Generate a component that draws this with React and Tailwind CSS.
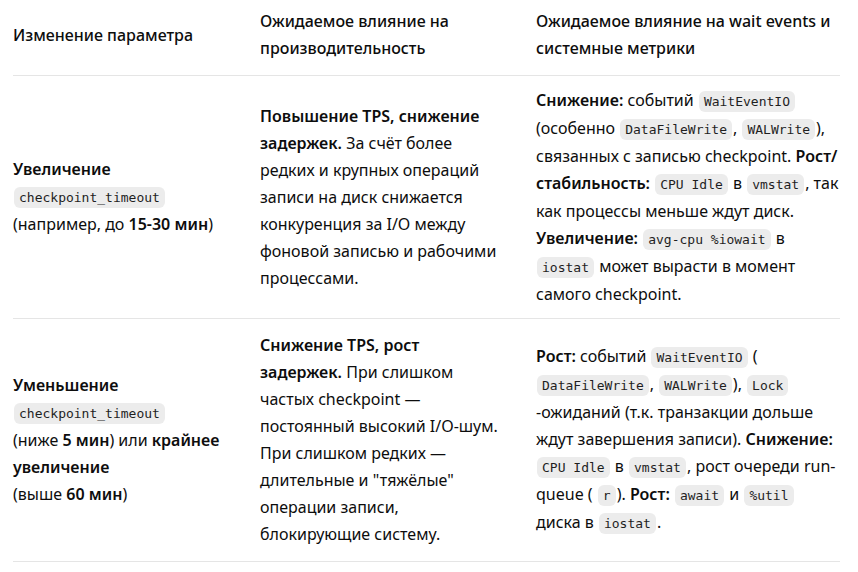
import React from "react";

const C = ({ children }) => (
  <code className="mx-[1px] whitespace-nowrap rounded-md bg-[#ececec] px-[5px] py-[3px] font-['DejaVu_Sans_Mono','Liberation_Mono',monospace] text-[13px] text-[#1f1f1f]">
    {children}
  </code>
);

export default function App() {
  return (
    <div className="min-h-[572px] w-[858px] bg-white font-['Noto_Sans','Open_Sans',sans-serif] text-[16px] leading-[27px] text-[#0d0d0d]">
      <table className="ml-[13px] w-[827px] table-fixed border-collapse">
        <colgroup>
          <col className="w-[247px]" />
          <col className="w-[276px]" />
          <col className="w-[304px]" />
        </colgroup>
        <thead>
          <tr className="border-b border-[#e5e5e5]">
            <th className="pb-[13px] pr-3 pt-[8px] text-left align-middle font-medium">Изменение параметра</th>
            <th className="pb-[13px] pr-[36px] pt-[8px] text-left align-middle font-medium">Ожидаемое влияние на производительность</th>
            <th className="pb-[13px] pt-[8px] text-left align-middle font-medium">Ожидаемое влияние на wait events и системные метрики</th>
          </tr>
        </thead>
        <tbody>
          <tr className="border-b border-[#e5e5e5]">
            <td className="h-[243px] pr-3 align-middle">
              <strong className="font-semibold">Увеличение</strong>
              <br />
              <C>checkpoint_timeout</C>
              <br />
              (например, до <strong className="font-semibold">15-30 мин</strong>)
            </td>
            <td className="pr-[36px] align-middle">
              <strong className="font-semibold">Повышение TPS, снижение задержек.</strong> За счёт более редких и крупных операций записи на диск снижается конкуренция за I/O между фоновой записью и рабочими процессами.
            </td>
            <td className="align-middle">
              <strong className="font-semibold">Снижение:</strong> событий <C>WaitEventIO</C> (особенно <C>DataFileWrite</C>, <C>WALWrite</C>), связанных с записью checkpoint. <strong className="font-semibold">Рост/стабильность:</strong> <C>CPU Idle</C> в <C>vmstat</C>, так как процессы меньше ждут диск. <strong className="font-semibold">Увеличение:</strong> <C>avg-cpu %iowait</C> в <C>iostat</C> может вырасти в момент самого checkpoint.
            </td>
          </tr>
          <tr className="border-b border-[#e5e5e5]">
            <td className="h-[243px] pr-3 align-middle">
              <strong className="font-semibold">Уменьшение</strong>
              <br />
              <C>checkpoint_timeout</C>
              <br />
              (ниже <strong className="font-semibold">5 мин</strong>) или <strong className="font-semibold">крайнее увеличение</strong>
              <br />
              (выше <strong className="font-semibold">60 мин</strong>)
            </td>
            <td className="pr-[36px] align-middle">
              <strong className="font-semibold">Снижение TPS, рост задержек.</strong> При слишком частых checkpoint — постоянный высокий I/O-шум. При слишком редких — длительные и "тяжёлые" операции записи, блокирующие систему.
            </td>
            <td className="align-middle">
              <strong className="font-semibold">Рост:</strong> событий <C>WaitEventIO</C> (<wbr /><C>DataFileWrite</C>, <C>WALWrite</C>), <C>Lock</C><wbr />-ожиданий (т.к. транзакции дольше ждут завершения записи). <strong className="font-semibold">Снижение:</strong> <C>CPU Idle</C> в <C>vmstat</C>, рост очереди run-queue (&nbsp;<C>r</C>). <strong className="font-semibold">Рост:</strong> <C>await</C> и <C>%util</C> диска в <C>iostat</C>.
            </td>
          </tr>
        </tbody>
      </table>
    </div>
  );
}
